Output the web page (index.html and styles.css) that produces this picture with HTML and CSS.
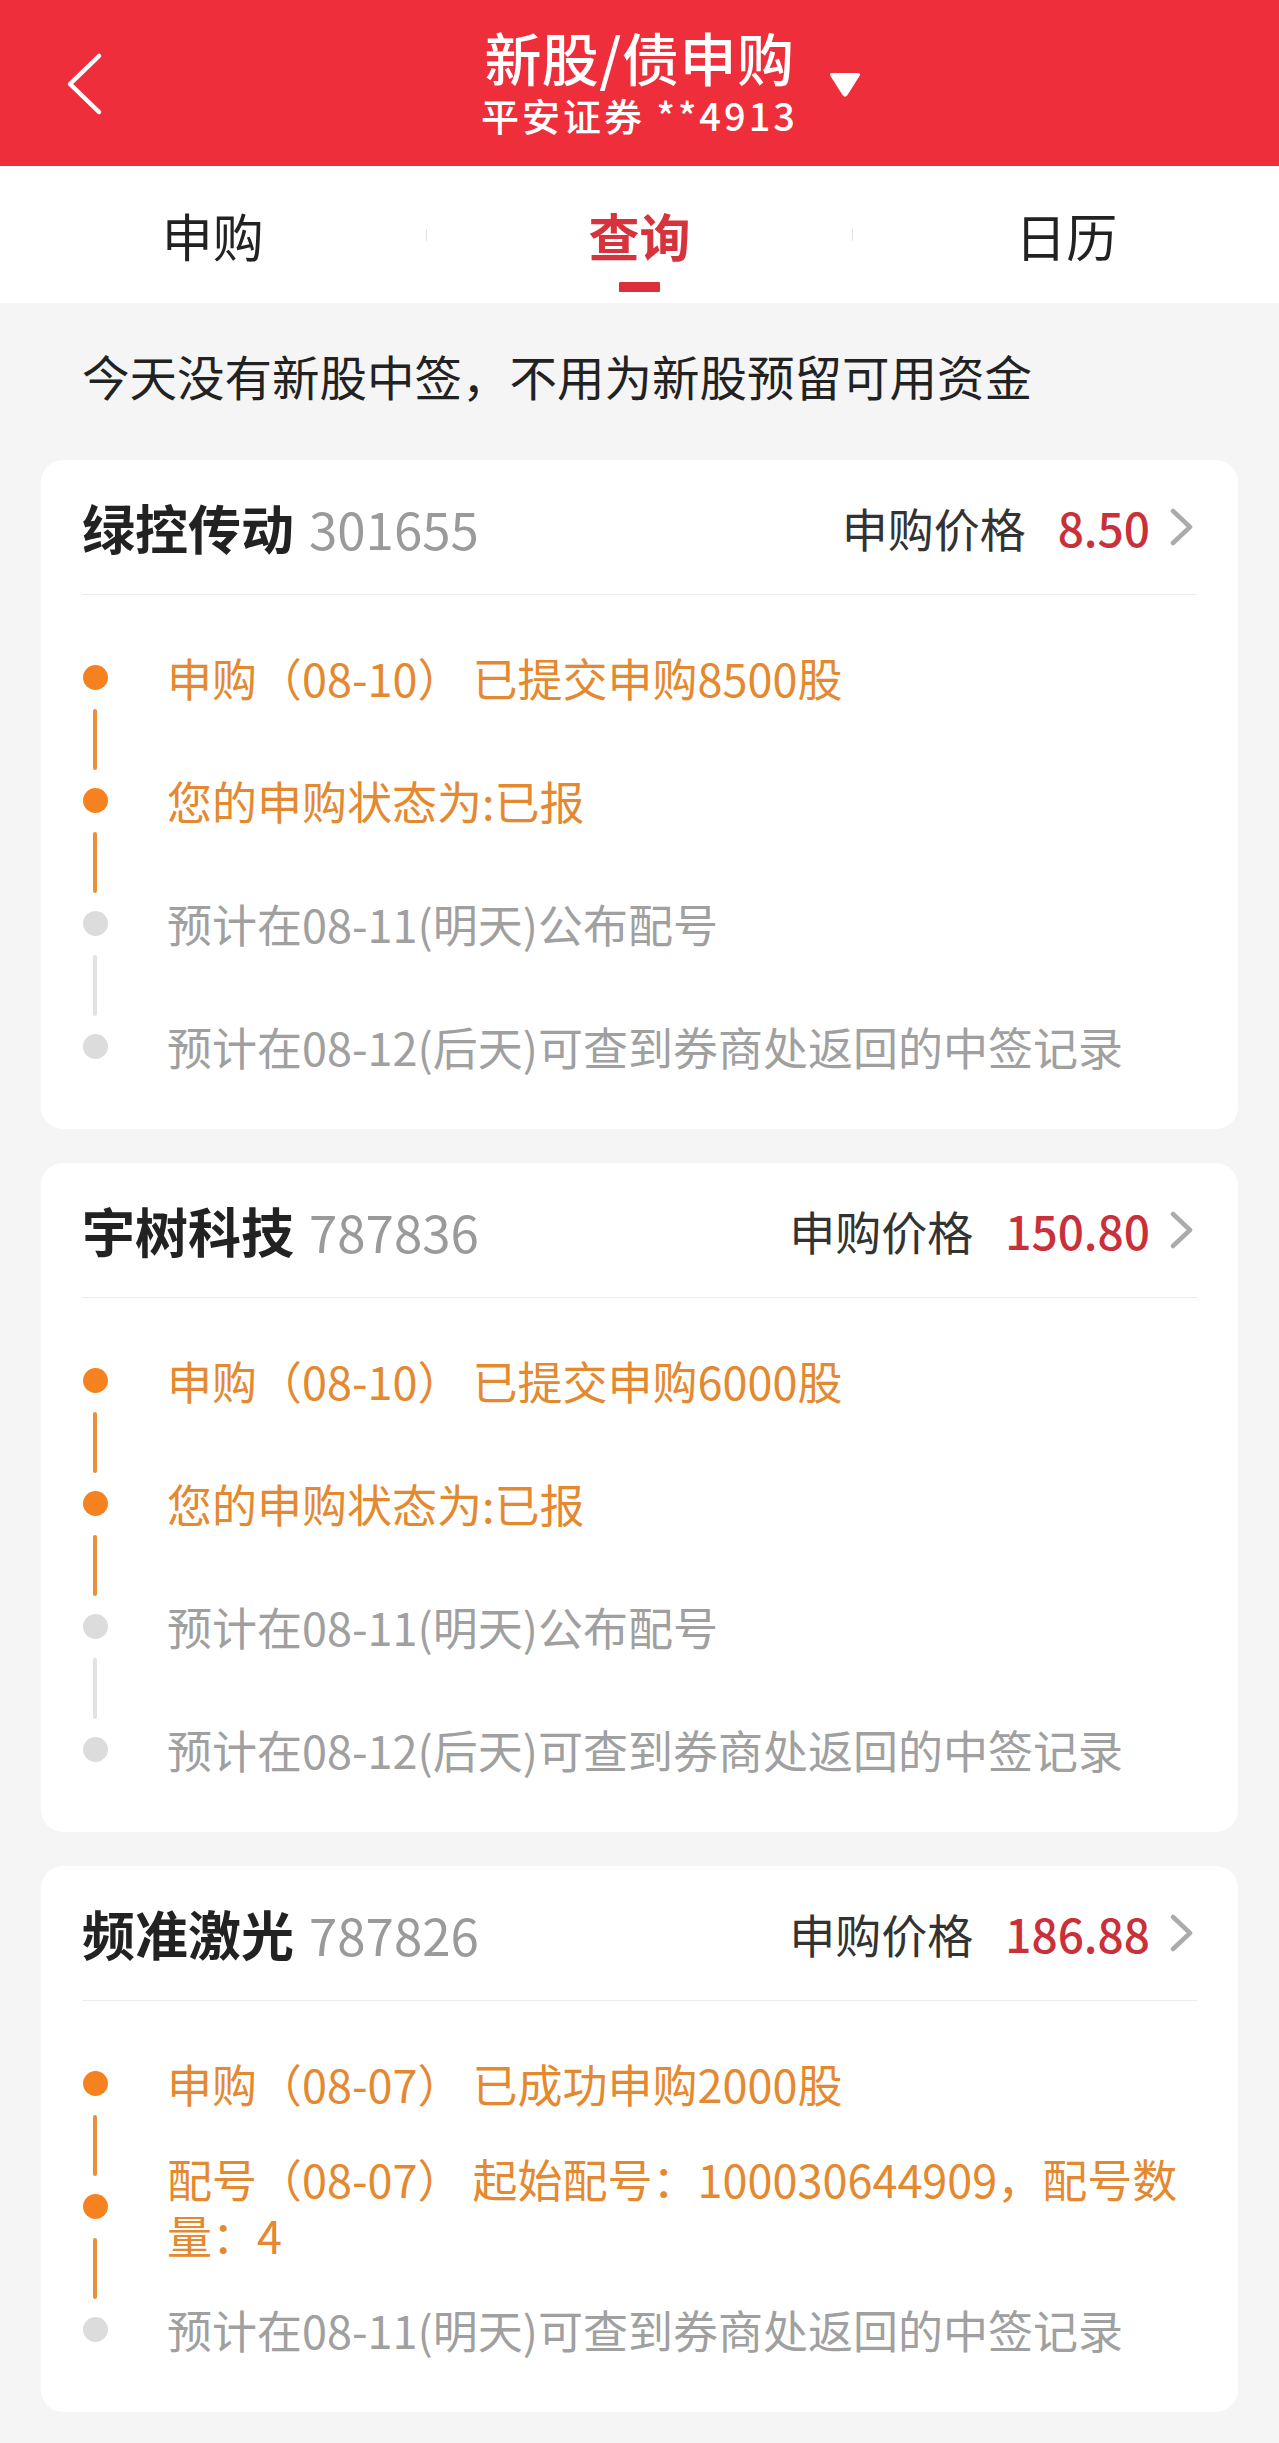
FILE: index.html
```html
<!DOCTYPE html>
<html lang="zh-CN">
<head>
<meta charset="utf-8">
<title>新股/债申购</title>
<link rel="stylesheet" href="styles.css">
</head>
<body>
<div class="page">
  <header class="topbar">
    <div class="topbar-left">
      <svg class="back" width="40" height="64" viewBox="0 0 40 64"><polyline points="33,4 4,32 33,60" fill="none" stroke="#fff" stroke-width="4.5" stroke-linecap="round" stroke-linejoin="round"/></svg>
    </div>
    <div class="topbar-title">
      <div class="title">新股/债申购</div>
      <div class="subtitle">平安证券 **4913</div>
    </div>
    <div class="topbar-right">
      <svg class="caret" width="34" height="28" viewBox="0 0 34 28"><path d="M4 3 L30 3 Q33 3 31.5 6 L19.5 25 Q17 28.5 14.5 25 L2.5 6 Q1 3 4 3 Z" fill="#fff"/></svg>
    </div>
  </header>

  <nav class="tabs">
    <div class="tab">申购</div>
    <span class="tab-sep"></span>
    <div class="tab active">查询<span class="tab-line"></span></div>
    <span class="tab-sep"></span>
    <div class="tab">日历</div>
  </nav>

  <p class="notice">今天没有新股中签，不用为新股预留可用资金</p>

  <section class="card">
    <div class="card-head">
      <div class="stock"><span class="stock-name">绿控传动</span><span class="stock-code">301655</span></div>
      <div class="price-box"><span class="price-label">申购价格</span><span class="price">8.50</span>
        <svg class="chev" width="24" height="38" viewBox="0 0 24 38"><polyline points="3,3 20,19 3,35" fill="none" stroke="#ababab" stroke-width="4.5" stroke-linecap="round" stroke-linejoin="round"/></svg>
      </div>
    </div>
    <ul class="timeline">
      <li class="item done"><span class="dot"></span><span class="text">申购（08-10） 已提交申购8500股</span></li>
      <li class="item done"><span class="dot"></span><span class="text">您的申购状态为:已报</span></li>
      <li class="item"><span class="dot"></span><span class="text">预计在08-11(明天)公布配号</span></li>
      <li class="item last"><span class="dot"></span><span class="text">预计在08-12(后天)可查到券商处返回的中签记录</span></li>
    </ul>
  </section>

  <section class="card">
    <div class="card-head">
      <div class="stock"><span class="stock-name">宇树科技</span><span class="stock-code">787836</span></div>
      <div class="price-box"><span class="price-label">申购价格</span><span class="price">150.80</span>
        <svg class="chev" width="24" height="38" viewBox="0 0 24 38"><polyline points="3,3 20,19 3,35" fill="none" stroke="#ababab" stroke-width="4.5" stroke-linecap="round" stroke-linejoin="round"/></svg>
      </div>
    </div>
    <ul class="timeline">
      <li class="item done"><span class="dot"></span><span class="text">申购（08-10） 已提交申购6000股</span></li>
      <li class="item done"><span class="dot"></span><span class="text">您的申购状态为:已报</span></li>
      <li class="item"><span class="dot"></span><span class="text">预计在08-11(明天)公布配号</span></li>
      <li class="item last"><span class="dot"></span><span class="text">预计在08-12(后天)可查到券商处返回的中签记录</span></li>
    </ul>
  </section>

  <section class="card">
    <div class="card-head">
      <div class="stock"><span class="stock-name">频准激光</span><span class="stock-code">787826</span></div>
      <div class="price-box"><span class="price-label">申购价格</span><span class="price">186.88</span>
        <svg class="chev" width="24" height="38" viewBox="0 0 24 38"><polyline points="3,3 20,19 3,35" fill="none" stroke="#ababab" stroke-width="4.5" stroke-linecap="round" stroke-linejoin="round"/></svg>
      </div>
    </div>
    <ul class="timeline">
      <li class="item done"><span class="dot"></span><span class="text">申购（08-07） 已成功申购2000股</span></li>
      <li class="item done"><span class="dot"></span><span class="text">配号（08-07） 起始配号：100030644909，配号数量：4</span></li>
      <li class="item last"><span class="dot"></span><span class="text">预计在08-11(明天)可查到券商处返回的中签记录</span></li>
    </ul>
  </section>
</div>
</body>
</html>
```

FILE: styles.css
```css
* {
  box-sizing: border-box;
}

html, body {
  margin: 0;
  padding: 0;
}

body {
  background: #f5f5f5;
  font-family: "Noto Sans CJK SC", "Noto Sans", sans-serif;
  color: #222;
}

.page {
  width: 1279px;
  min-height: 2443px;
  background: #f5f5f5;
}

/* ---------- top bar ---------- */
.topbar {
  height: 166px;
  background: #ee2e3a;
  display: grid;
  grid-template-columns: 1fr auto 1fr;
  color: #fff;
}

.topbar-left {
  display: flex;
  align-items: flex-start;
  padding-left: 66px;
  padding-top: 52px;
}

.topbar-title {
  padding-top: 25px;
  text-align: center;
}

.title {
  font-size: 57px;
  line-height: 62px;
  font-weight: 500;
  letter-spacing: 0.5px;
}

.subtitle {
  margin-top: 6px;
  font-size: 38px;
  line-height: 44px;
  font-weight: 500;
  letter-spacing: 3px;
}

.topbar-right {
  padding-left: 30px;
  padding-top: 70px;
}

.caret {
  display: block;
}

/* ---------- tabs ---------- */
.tabs {
  height: 137px;
  background: #fff;
  display: flex;
  align-items: flex-start;
}

.tab {
  flex: 1;
  height: 137px;
  padding-top: 39px;
  display: flex;
  flex-direction: column;
  align-items: center;
  font-size: 51px;
  line-height: 60px;
  color: #222;
}

.tab.active {
  color: #d7333c;
  font-weight: 700;
}

.tab-line {
  display: block;
  width: 41px;
  height: 10px;
  margin-top: 17px;
  background: #dd2f3a;
  border-radius: 1px;
}

.tab-sep {
  width: 1px;
  height: 12px;
  margin-top: 63px;
  background: #e2e2e2;
}

/* ---------- notice ---------- */
.notice {
  margin: 0;
  padding: 46px 0 57px 82px;
  font-size: 47.5px;
  line-height: 54px;
  color: #222;
}

/* ---------- cards ---------- */
.card {
  margin: 0 41px 34px;
  background: #fff;
  border-radius: 22px;
  padding: 0 41px 21px;
}

.card-head {
  height: 135px;
  display: flex;
  align-items: center;
  justify-content: space-between;
  border-bottom: 1px solid #ececec;
}

.stock {
  display: flex;
  align-items: baseline;
}

.stock-name {
  font-size: 53px;
  font-weight: 700;
  color: #222;
}

.stock-code {
  margin-left: 15px;
  font-size: 51px;
  color: #9a9a9a;
}

.price-box {
  display: flex;
  align-items: center;
}

.price-label {
  font-size: 46px;
  color: #333;
}

.price {
  margin-left: 32px;
  font-size: 46px;
  font-weight: 500;
  color: #c9303a;
}

.chev {
  display: block;
  margin-left: 20px;
  margin-right: 3px;
}

/* ---------- timeline ---------- */
.timeline {
  list-style: none;
  margin: 0;
  padding: 21px 0 0;
}

.item {
  position: relative;
  min-height: 123px;
  display: flex;
  align-items: center;
}

.dot {
  flex: none;
  width: 25px;
  height: 25px;
  margin-left: 1px;
  border-radius: 50%;
  background: #dcdcdc;
}

.item.done .dot {
  background: #f5821f;
}

.item::after {
  content: "";
  position: absolute;
  left: 11px;
  top: calc(50% + 31px);
  width: 4px;
  height: 61px;
  border-radius: 2px;
  background: #e2e2e2;
}

.item.done::after {
  background: #e8903a;
}

.item.last::after {
  display: none;
}

.text {
  margin-left: 59px;
  font-size: 45px;
  line-height: 56px;
  color: #a0a0a0;
}

.item.done .text {
  color: #e4892f;
}
```
